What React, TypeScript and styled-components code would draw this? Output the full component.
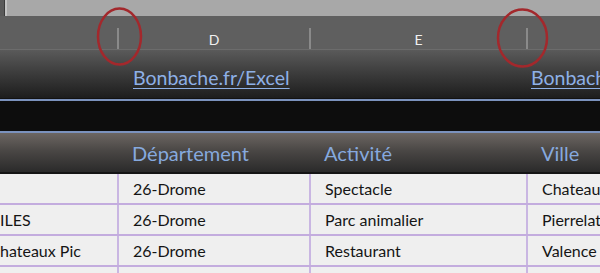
import React from 'react';
import styled, {createGlobalStyle} from 'styled-components';

const GlobalStyle = createGlobalStyle`
  html, body {
    margin: 0;
    padding: 0;
    background: #efefef;
  }
  body {
    font-family: Lato, 'Open Sans', sans-serif;
  }
`;

const COLS = '118px 192px 217px 1fr';

const Sheet = styled.div`
  position: relative;
  width: 600px;
  height: 273px;
  overflow: hidden;
  background: #efefef;
`;

const TopBand = styled.div`
  height: 16px;
  display: flex;
  background: #5c5c5c;
`;

const TopBandEdge = styled.div`
  width: 4px;
  background: #5a5a5a;
  border-right: 1px solid #3c3c3c;
`;

const TopBandFill = styled.div`
  flex: 1;
  background: #a8a8a8;
  border-left: 2px solid #c4c4c4;
`;

const ColumnHeaders = styled.div`
  height: 33px;
  display: grid;
  grid-template-columns: ${COLS};
  background: #5f5f5f;
  border-bottom: 1px solid #6c6c6c;
`;

const ColumnHeader = styled.div<{sep?: boolean}>`
  position: relative;
  display: flex;
  align-items: center;
  justify-content: center;
  padding-top: 13px;
  color: #f0f0f0;
  font-size: 14px;

  &::before {
    content: '';
    display: ${p => (p.sep ? 'block' : 'none')};
    position: absolute;
    left: -1px;
    bottom: 0;
    width: 2px;
    height: 21px;
    background: #8a8a8a;
  }
`;

const LinkRow = styled.div`
  height: 48px;
  display: grid;
  grid-template-columns: ${COLS};
  background: linear-gradient(#5a5a5a 0%, #3e3e3e 45%, #1d1d1d 100%);
  border-bottom: 1px solid #121212;
`;

const LinkCell = styled.div<{pad: number}>`
  display: flex;
  align-items: flex-end;
  padding-left: ${p => p.pad}px;
  padding-bottom: 9px;
  white-space: nowrap;
  overflow: hidden;
`;

const SiteLink = styled.a`
  color: #8eb0e6;
  font-size: 19.5px;
  text-decoration: underline;
  text-underline-offset: 3px;
  text-decoration-thickness: 1px;
`;

const BlackBand = styled.div`
  height: 30px;
  background: #0d0d0d;
  border-top: 2px solid #7b92bd;
  border-bottom: 2px solid #7b92bd;
`;

const HeaderRow = styled.div`
  height: 39px;
  display: grid;
  grid-template-columns: ${COLS};
  background: linear-gradient(#6c6662 0%, #4a4745 45%, #2a2a2a 100%);
  border-bottom: 2px solid #151515;
`;

const HeaderCell = styled.div`
  display: flex;
  align-items: center;
  padding-left: 14px;
  color: #86a9de;
  font-size: 20px;
  white-space: nowrap;
  overflow: hidden;
`;

const DataRow = styled.div`
  height: 29px;
  display: grid;
  grid-template-columns: ${COLS};
  border-bottom: 2px solid #c3acde;
`;

const DataCell = styled.div<{first?: boolean}>`
  display: flex;
  align-items: center;
  padding-left: ${p => (p.first ? 0 : 14)}px;
  color: #151515;
  font-size: 16px;
  white-space: nowrap;
  overflow: hidden;
  border-left: ${p => (p.first ? 'none' : '2px solid #c9b6e2')};
  margin-left: ${p => (p.first ? 0 : -1)}px;
`;

const Annotations = styled.svg`
  position: absolute;
  left: 0;
  top: 0;
  pointer-events: none;
`;

const rows = [
  {name: '', dep: '26-Drome', act: 'Spectacle', ville: 'Chateauneuf'},
  {name: 'ILES', dep: '26-Drome', act: 'Parc animalier', ville: 'Pierrelatte'},
  {name: 'hateaux Pic', dep: '26-Drome', act: 'Restaurant', ville: 'Valence'},
  {name: '', dep: '', act: '', ville: ''},
];

export default function App() {
  return (
    <Sheet>
      <GlobalStyle />
      <TopBand>
        <TopBandEdge />
        <TopBandFill />
      </TopBand>
      <ColumnHeaders>
        <ColumnHeader />
        <ColumnHeader sep>D</ColumnHeader>
        <ColumnHeader sep>E</ColumnHeader>
        <ColumnHeader sep />
      </ColumnHeaders>
      <LinkRow>
        <LinkCell pad={0} />
        <LinkCell pad={15}>
          <SiteLink>Bonbache.fr/Excel</SiteLink>
        </LinkCell>
        <LinkCell pad={0} />
        <LinkCell pad={4}>
          <SiteLink>Bonbache.fr/Excel</SiteLink>
        </LinkCell>
      </LinkRow>
      <BlackBand />
      <HeaderRow>
        <HeaderCell />
        <HeaderCell>Département</HeaderCell>
        <HeaderCell>Activité</HeaderCell>
        <HeaderCell>Ville</HeaderCell>
      </HeaderRow>
      {rows.map((r, i) => (
        <DataRow key={i}>
          <DataCell first>{r.name}</DataCell>
          <DataCell>{r.dep}</DataCell>
          <DataCell>{r.act}</DataCell>
          <DataCell>{r.ville}</DataCell>
        </DataRow>
      ))}
      <Annotations width={600} height={273}>
        <ellipse cx={119.5} cy={36.5} rx={21.5} ry={28} fill="none" stroke="#a3282c" strokeWidth={2.5} />
        <ellipse cx={522.5} cy={38} rx={24.5} ry={28.5} fill="none" stroke="#a3282c" strokeWidth={2.5} />
      </Annotations>
    </Sheet>
  );
}
